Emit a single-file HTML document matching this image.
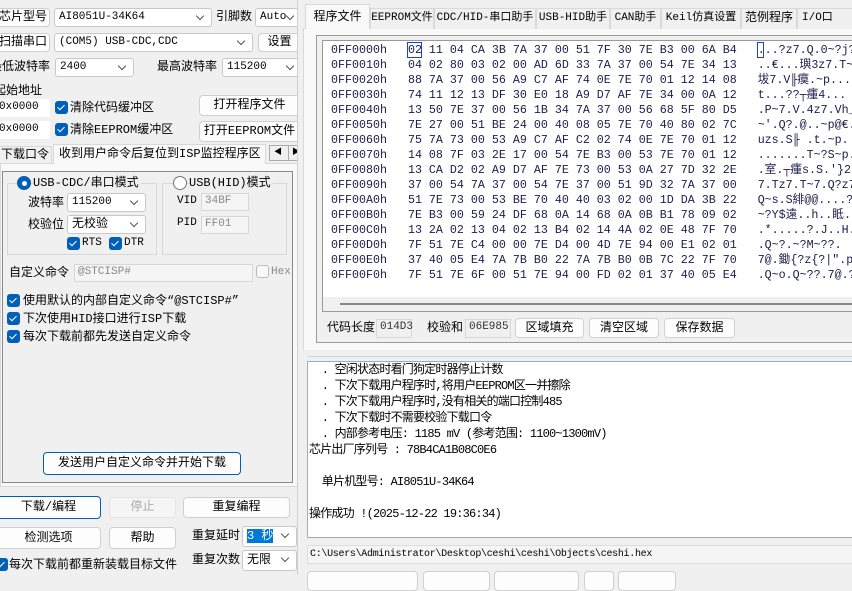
<!DOCTYPE html>
<html><head><meta charset="utf-8"><style>
*{box-sizing:border-box;margin:0;padding:0}
body{width:852px;height:575px;overflow:hidden;background:#f0f0f0;position:relative;font-family:"Liberation Mono","Noto Sans CJK SC",monospace;font-size:12px;color:#000}
.a{position:absolute;white-space:nowrap}
.cb{position:absolute;background:#fff;border:1px solid #c8c8c8;border-radius:3px;font-size:11px;line-height:16px;padding-left:4px;overflow:hidden}
.cb::after{content:"";position:absolute;right:8px;top:4px;width:5px;height:5px;border-right:1px solid #555;border-bottom:1px solid #555;transform:rotate(45deg)}
.bt{position:absolute;background:#fdfdfd;border:1px solid #d0d0d0;border-radius:4px;text-align:center;font-size:12px;font-family:"Liberation Mono","Noto Sans CJK SC",sans-serif}
.lb{position:absolute;white-space:nowrap;font-size:12px;line-height:18px;font-family:"Liberation Mono","Noto Sans CJK SC",sans-serif}
.ck{position:absolute;width:13px;height:13px;background:#005fb8;border-radius:3px}
.ck::after{content:"";position:absolute;left:4px;top:1.5px;width:3px;height:6px;border-right:1.5px solid #fff;border-bottom:1.5px solid #fff;transform:rotate(45deg)}
.m{font-family:"Liberation Mono",monospace;font-size:11px}
.hx{position:absolute;left:331px;font-size:11.67px;white-space:pre;color:#1c1c4a;line-height:15px;font-family:"Liberation Mono","Noto Sans CJK SC",monospace}
.tab{position:absolute;top:8px;height:21px;border:1px solid #d9d9d9;border-bottom:none;background:#f0f0f0;font-size:11px;line-height:19px;text-align:center;overflow:hidden}
.fd{position:absolute;background:#f5f5f5;border:1px solid #d8d8d8;font-size:11px;color:#888;line-height:15px;padding-left:3px}
</style></head><body>
<div class="bt" style="left:-4px;top:8px;width:54px;height:19px;line-height:17px">芯片型号</div>
<div class="cb" style="left:54px;top:8px;width:158px;height:19px"><span class="m">AI8051U-34K64</span></div>
<div class="lb" style="left:216px;top:8px">引脚数</div>
<div class="cb" style="left:255px;top:8px;width:47px;height:19px"><span class="m">Auto</span></div>
<div class="bt" style="left:-4px;top:33px;width:54px;height:19px;line-height:17px">扫描串口</div>
<div class="cb" style="left:54px;top:33px;width:199px;height:19px"><span class="m">(COM5) USB-CDC,CDC</span></div>
<div class="bt" style="left:258px;top:33px;width:43px;height:19px;line-height:17px">设置</div>
<div class="lb" style="left:-10px;top:58px">最低波特率</div>
<div class="cb" style="left:55px;top:58px;width:79px;height:19px"><span class="m">2400</span></div>
<div class="lb" style="left:157px;top:58px">最高波特率</div>
<div class="cb" style="left:222px;top:58px;width:80px;height:19px"><span class="m">115200</span></div>
<div class="lb" style="left:-6px;top:82px">起始地址</div>
<div class="a m" style="left:-4px;top:99px;width:54px;height:18px;background:#fff;padding-left:3px;line-height:17px">0x0000</div>
<div class="ck" style="left:55px;top:101px"></div><div class="lb" style="left:70px;top:99px">清除代码缓冲区</div>
<div class="bt" style="left:199px;top:95px;width:101px;height:21px;line-height:19px">打开程序文件</div>
<div class="a m" style="left:-4px;top:121px;width:54px;height:18px;background:#fff;padding-left:3px;line-height:17px">0x0000</div>
<div class="ck" style="left:55px;top:123px"></div><div class="lb" style="left:70px;top:121px">清除EEPROM缓冲区</div>
<div class="bt" style="left:199px;top:121px;width:101px;height:21px;line-height:19px">打开EEPROM文件</div>
<div class="a" style="left:0;top:163px;width:298px;height:324px;background:#f9f9f9;border:1px solid #d9d9d9"></div>
<div class="lb" style="left:-2px;top:146px;width:54px;height:18px;border:1px solid #d9d9d9;background:#f0f0f0;padding-left:2px;line-height:16px">下载口令</div>
<div class="lb" style="left:53px;top:144px;width:213px;height:20px;background:#f9f9f9;border:1px solid #d9d9d9;border-bottom:none;padding-left:5px">收到用户命令后复位到ISP监控程序区</div>
<div class="a" style="left:269px;top:145px;width:32px;height:16px;border:1px solid #aaa;background:#f0f0f0;font-size:8px;line-height:14px"><span style="position:absolute;left:4px">◀</span><span style="position:absolute;left:18px;border-left:1px solid #aaa;padding-left:3px">▶</span></div>
<div class="a" style="left:2px;top:171px;width:291px;height:312px;border:1px solid #888;background:#f0f0f0"></div>
<div class="a" style="left:7px;top:183px;width:150px;height:72px;border:1px solid #d8d8d8"></div>
<div class="a" style="left:17px;top:176px;width:14px;height:14px;border-radius:50%;background:#005fb8;border:1px solid #005fb8"><div style="margin:3.5px;width:5px;height:5px;border-radius:50%;background:#fff"></div></div>
<div class="lb" style="left:33px;top:174px;background:#f0f0f0;padding-right:2px">USB-CDC/串口模式</div>
<div class="lb" style="left:28px;top:194px">波特率</div>
<div class="cb" style="left:67px;top:193px;width:79px;height:19px"><span class="m">115200</span></div>
<div class="lb" style="left:28px;top:216px">校验位</div>
<div class="cb" style="left:67px;top:215px;width:79px;height:19px;font-size:12px">无校验</div>
<div class="ck" style="left:67px;top:237px"></div><div class="a m" style="left:82px;top:237px">RTS</div>
<div class="ck" style="left:109px;top:237px"></div><div class="a m" style="left:124px;top:237px">DTR</div>
<div class="a" style="left:162px;top:183px;width:125px;height:72px;border:1px solid #d8d8d8"></div>
<div class="a" style="left:173px;top:176px;width:14px;height:14px;border-radius:50%;background:#fff;border:1px solid #777"></div>
<div class="lb" style="left:189px;top:174px;background:#f0f0f0;padding-right:2px">USB(HID)模式</div>
<div class="a m" style="left:177px;top:195px">VID</div><div class="fd" style="left:201px;top:193px;width:48px;height:18px">34BF</div>
<div class="a m" style="left:177px;top:217px">PID</div><div class="fd" style="left:201px;top:216px;width:48px;height:18px">FF01</div>
<div class="lb" style="left:9px;top:264px">自定义命令</div>
<div class="fd" style="left:74px;top:264px;width:179px;height:18px">@STCISP#</div>
<div class="a" style="left:256px;top:265px;width:13px;height:13px;border:1px solid #bbb;border-radius:3px;background:#f8f8f8"></div>
<div class="a m" style="left:271px;top:266px;color:#888">Hex</div>
<div class="ck" style="left:7px;top:294px"></div><div class="lb" style="left:23px;top:292px">使用默认的内部自定义命令“@STCISP#”</div>
<div class="ck" style="left:7px;top:312px"></div><div class="lb" style="left:23px;top:310px">下次使用HID接口进行ISP下载</div>
<div class="ck" style="left:7px;top:330px"></div><div class="lb" style="left:23px;top:328px">每次下载前都先发送自定义命令</div>
<div class="bt" style="left:43px;top:452px;width:198px;height:23px;line-height:21px;border-color:#005fb8">发送用户自定义命令并开始下载</div>
<div class="bt" style="left:-4px;top:496px;width:105px;height:23px;line-height:21px;border-color:#005fb8">下载/编程</div>
<div class="bt" style="left:109px;top:497px;width:67px;height:21px;line-height:19px;color:#aaa;background:#f5f5f5;border-color:#e3e3e3">停止</div>
<div class="bt" style="left:183px;top:497px;width:107px;height:21px;line-height:19px">重复编程</div>
<div class="bt" style="left:-4px;top:527px;width:105px;height:22px;line-height:20px">检测选项</div>
<div class="bt" style="left:109px;top:527px;width:67px;height:22px;line-height:20px">帮助</div>
<div class="lb" style="left:192px;top:527px">重复延时</div>
<div class="cb" style="left:242px;top:526px;width:55px;height:21px;line-height:19px"><span style="background:#0078d7;color:#fff;font-size:12px">3 秒</span></div>
<div class="ck" style="left:-5px;top:558px"></div><div class="lb" style="left:9px;top:556px">每次下载前都重新装载目标文件</div>
<div class="lb" style="left:192px;top:551px">重复次数</div>
<div class="cb" style="left:242px;top:550px;width:55px;height:21px;line-height:19px;font-size:12px">无限</div>
<div class="a" style="left:297px;top:0;width:9px;height:575px;background:#f0f0f0;border-left:1px solid #d0d0d0"></div>
<div class="a" style="left:303px;top:28px;width:549px;height:322px;background:#f9f9f9;border-top:1px solid #d9d9d9;border-left:1px solid #d9d9d9"></div>
<div class="tab" style="left:305px;top:4px;width:65px;height:25px;background:#f9f9f9;font-size:12px;line-height:24px">程序文件</div>
<div class="tab" style="left:370px;width:64px">EEPROM文件</div>
<div class="tab" style="left:434px;width:102px">CDC/HID-串口助手</div>
<div class="tab" style="left:536px;width:74px">USB-HID助手</div>
<div class="tab" style="left:610px;width:51px">CAN助手</div>
<div class="tab" style="left:661px;width:80px">Keil仿真设置</div>
<div class="tab" style="left:741px;width:56px;font-size:12px">范例程序</div>
<div class="tab" style="left:797px;width:60px;text-align:left;padding-left:4px">I/O口</div>
<div class="a" style="left:316px;top:35px;width:540px;height:308px;border:1px solid #999;background:#f0f0f0"></div>
<div class="a" style="left:322px;top:40px;width:534px;height:272px;border:1px solid #999;background:#fff;border-right:none"></div>
<div class="a" style="left:323px;top:297px;width:529px;height:14px;background:#f0f0f0"></div>
<div class="a" style="left:340px;top:303px;width:512px;height:2px;background:#888"></div>
<div class="hx" style="top:43px">0FF0000h   02 11 04 CA 3B 7A 37 00 51 7F 30 7E B3 00 6A B4   ...?z7.Q.0~?j?
0FF0010h   04 02 80 03 02 00 AD 6D 33 7A 37 00 54 7E 34 13   ..€...璵3z7.T~4
0FF0020h   88 7A 37 00 56 A9 C7 AF 74 0E 7E 70 01 12 14 08   坺7.V╟瘼.~p...
0FF0030h   74 11 12 13 DF 30 E0 18 A9 D7 AF 7E 34 00 0A 12   t...??┬瘇4...
0FF0040h   13 50 7E 37 00 56 1B 34 7A 37 00 56 68 5F 80 D5   .P~7.V.4z7.Vh_
0FF0050h   7E 27 00 51 BE 24 00 40 08 05 7E 70 40 80 02 7C   ~'.Q?.@..~p@€.
0FF0060h   75 7A 73 00 53 A9 C7 AF C2 02 74 0E 7E 70 01 12   uzs.S╟ .t.~p.
0FF0070h   14 08 7F 03 2E 17 00 54 7E B3 00 53 7E 70 01 12   .......T~?S~p.
0FF0080h   13 CA D2 02 A9 D7 AF 7E 73 00 53 0A 27 7D 32 2E   .室.┬瘇s.S.'}2
0FF0090h   37 00 54 7A 37 00 54 7E 37 00 51 9D 32 7A 37 00   7.Tz7.T~7.Q?z7
0FF00A0h   51 7E 73 00 53 BE 70 40 40 03 02 00 1D DA 3B 22   Q~s.S緋@@....?
0FF00B0h   7E B3 00 59 24 DF 68 0A 14 68 0A 0B B1 78 09 02   ~?Y$遠..h..眡.
0FF00C0h   13 2A 02 13 04 02 13 B4 02 14 4A 02 0E 48 7F 70   .*.....?.J..H.
0FF00D0h   7F 51 7E C4 00 00 7E D4 00 4D 7E 94 00 E1 02 01   .Q~?.~?M~??.
0FF00E0h   37 40 05 E4 7A 7B B0 22 7A 7B B0 0B 7C 22 7F 70   7@.鋤{?z{?|".p
0FF00F0h   7F 51 7E 6F 00 51 7E 94 00 FD 02 01 37 40 05 E4   .Q~o.Q~??.7@.?</div>
<div class="a" style="left:407px;top:42px;width:15px;height:16px;border:1px solid #1a3cf0"></div>
<div class="a" style="left:757px;top:42px;width:7px;height:16px;border:1px solid #1a3cf0"></div>
<div class="lb" style="left:327px;top:319px">代码长度</div>
<div class="fd" style="left:376px;top:319px;width:36px;height:19px;color:#333;background:#f0f0f0">014D3</div>
<div class="lb" style="left:427px;top:319px">校验和</div>
<div class="fd" style="left:465px;top:319px;width:46px;height:19px;color:#333;background:#f0f0f0">06E985</div>
<div class="bt" style="left:515px;top:318px;width:69px;height:20px;line-height:18px">区域填充</div>
<div class="bt" style="left:589px;top:318px;width:70px;height:20px;line-height:18px">清空区域</div>
<div class="bt" style="left:664px;top:318px;width:71px;height:20px;line-height:18px">保存数据</div>
<div class="a" style="left:307px;top:356px;width:545px;height:1px;background:#b8dcf5"></div>
<div class="a" style="left:307px;top:361px;width:550px;height:177px;background:#fff;border:1px solid #aaa;border-right:none"></div>
<div class="a" style="left:309px;top:362px;font-size:12px;line-height:16px;letter-spacing:-0.8px;white-space:pre;font-family:'Liberation Mono','Noto Sans CJK SC',monospace">  . 空闲状态时看门狗定时器停止计数
  . 下次下载用户程序时,将用户EEPROM区一并擦除
  . 下次下载用户程序时,没有相关的端口控制485
  . 下次下载时不需要校验下载口令
  . 内部参考电压: 1185 mV (参考范围: 1100~1300mV)
芯片出厂序列号 : 78B4CA1B08C0E6

  单片机型号: AI8051U-34K64

操作成功 !(2025-12-22 19:36:34)</div>
<div class="a" style="left:307px;top:545px;width:550px;height:19px;background:#f5f5f5;border:1px solid #ddd;border-right:none;font-size:10px;letter-spacing:-0.3px;line-height:17px;padding-left:2px">C:\Users\Administrator\Desktop\ceshi\ceshi\Objects\ceshi.hex</div>
<div class="bt" style="left:307px;top:571px;width:111px;height:20px"></div>
<div class="bt" style="left:423px;top:571px;width:67px;height:20px"></div>
<div class="bt" style="left:494px;top:571px;width:85px;height:20px"></div>
<div class="bt" style="left:584px;top:571px;width:30px;height:20px"></div>
<div class="bt" style="left:618px;top:571px;width:58px;height:20px"></div>
</body></html>
